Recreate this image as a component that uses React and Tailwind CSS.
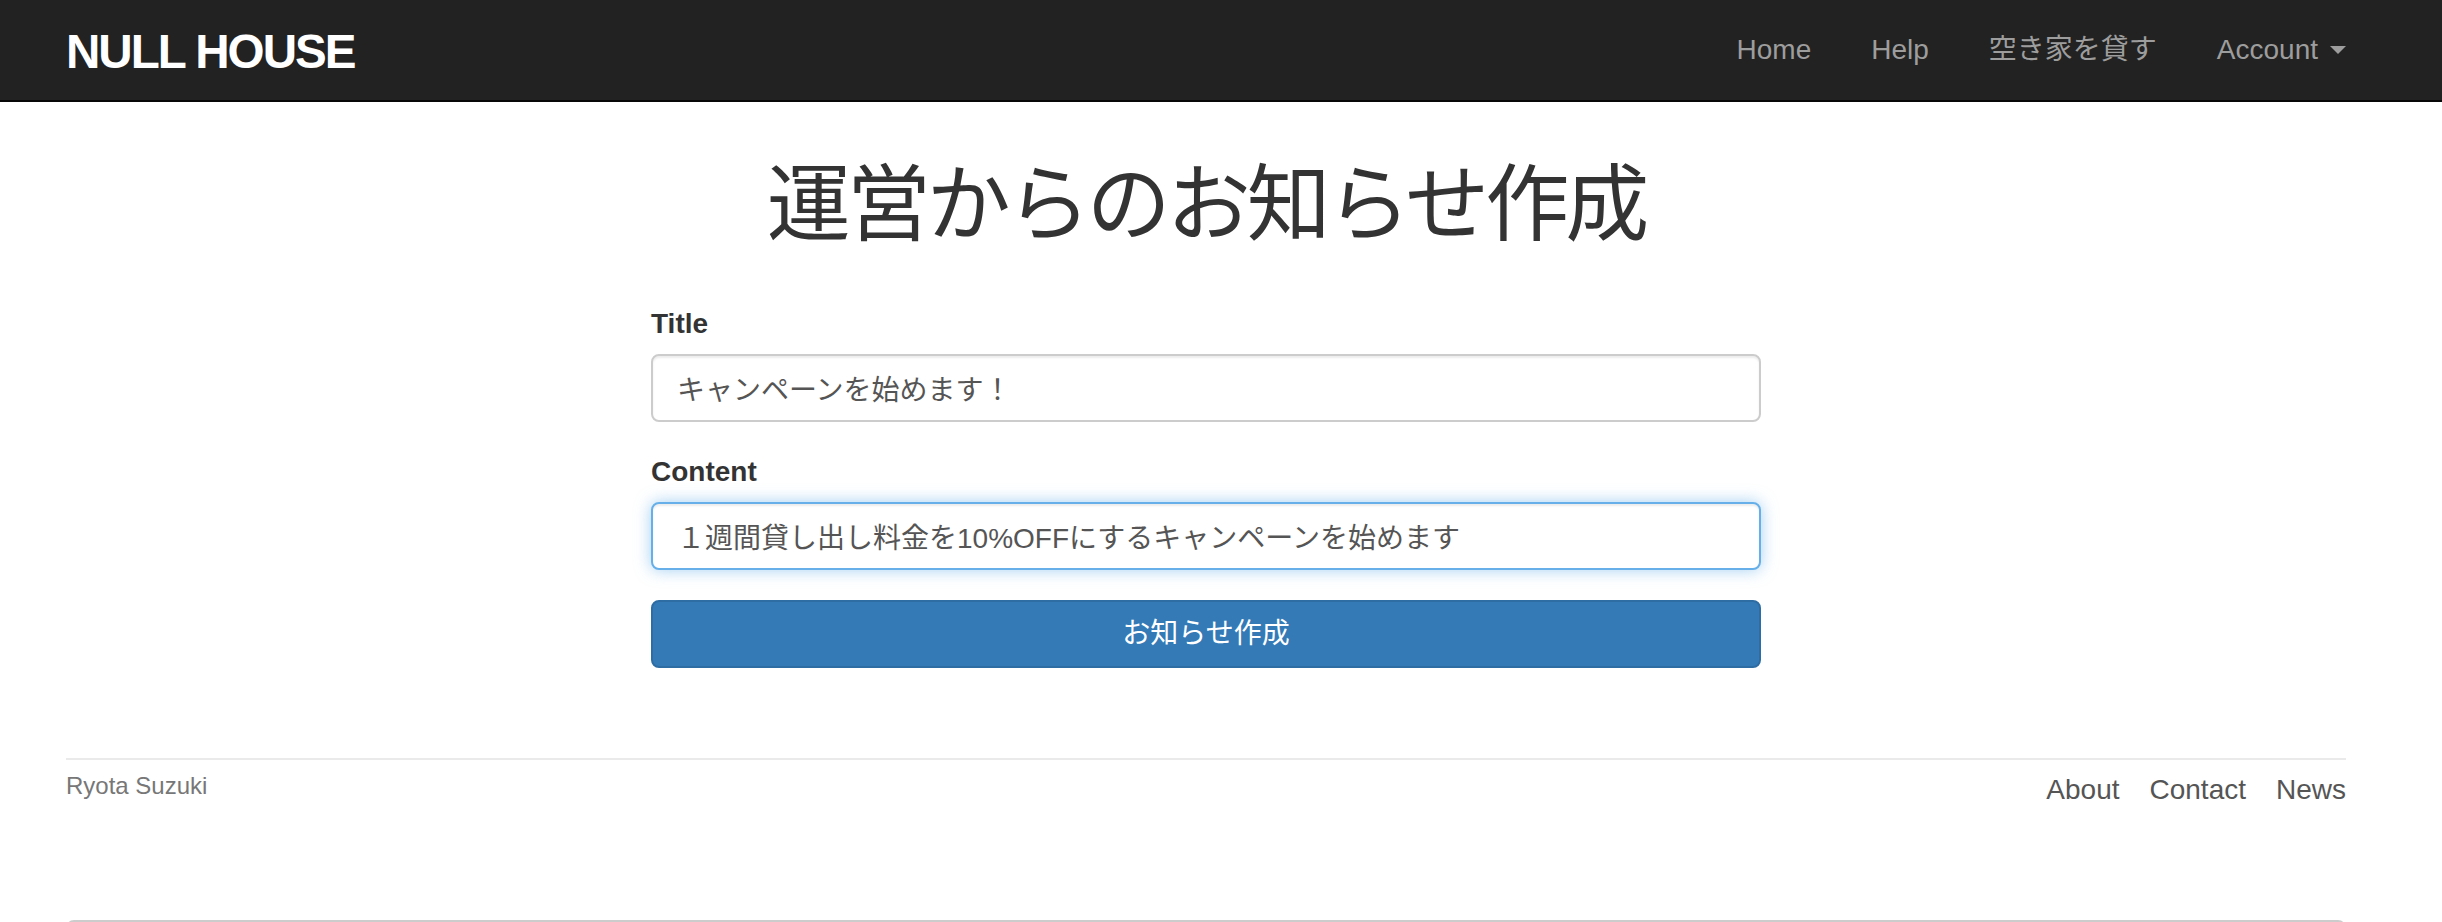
export default function App() {
  return (
    <div className="min-h-screen bg-white text-[#333] font-['Liberation_Sans','Noto_Sans_CJK_JP',sans-serif] text-[28px] leading-[40px]">
      <header className="h-[102px] bg-[#222] border-b-2 border-[#080808]">
        <div className="w-[2412px]">
          <div className="mx-auto w-[2340px] px-[30px] flex items-start justify-between">
            <a className="block pt-[18px] text-[47.6px] leading-[68px] font-bold uppercase tracking-[-2px] text-white">
              null house
            </a>
            <ul className="flex mr-[-30px]">
              <li>
                <a className="block px-[30px] py-[30px] text-[#9d9d9d]">Home</a>
              </li>
              <li>
                <a className="block px-[30px] py-[30px] text-[#9d9d9d]">Help</a>
              </li>
              <li>
                <a className="block px-[30px] py-[30px] text-[#9d9d9d]">空き家を貸す</a>
              </li>
              <li>
                <a className="flex items-center px-[30px] py-[30px] text-[#9d9d9d]">
                  Account
                  <span className="ml-[12px] inline-block w-0 h-0 border-t-[8px] border-t-[#9d9d9d] border-x-[8px] border-x-transparent" />
                </a>
              </li>
            </ul>
          </div>
        </div>
      </header>

      <div className="w-[2412px]">
        <div className="mx-auto w-[2340px] px-[30px]">
          <h1 className="mt-[57px] mb-[53px] text-center text-[84px] leading-[92px] tracking-[-4px] font-normal">
            運営からのお知らせ作成
          </h1>

          <div className="mx-auto w-[1110px]">
            <div className="mb-[30px]">
              <label className="block mb-[10px] font-bold">Title</label>
              <input
                readOnly
                defaultValue="キャンペーンを始めます！"
                className="block w-full h-[68px] px-[24px] py-[12px] border-2 border-[#ccc] rounded-[8px] text-[#555] bg-white shadow-[inset_0_2px_2px_rgba(0,0,0,0.075)] outline-none"
              />
            </div>
            <div className="mb-[30px]">
              <label className="block mb-[10px] font-bold">Content</label>
              <input
                readOnly
                defaultValue="１週間貸し出し料金を10%OFFにするキャンペーンを始めます"
                className="block w-full h-[68px] px-[24px] py-[12px] border-2 border-[#66afe9] rounded-[8px] text-[#555] bg-white shadow-[inset_0_2px_2px_rgba(0,0,0,0.075),0_0_16px_rgba(102,175,233,0.6)] outline-none"
              />
            </div>
            <button className="block w-full h-[68px] px-[24px] py-[12px] border-2 border-[#2e6da4] rounded-[8px] bg-[#337ab7] text-white text-center">
              お知らせ作成
            </button>
          </div>

          <footer className="mt-[90px] pt-[10px] border-t-2 border-[#eaeaea] text-[#777] flex justify-between items-start">
            <small className="text-[24px] leading-[32px]">Ryota Suzuki</small>
            <ul className="flex mb-[20px]">
              <li className="ml-[30px]">
                <a className="text-[#555]">About</a>
              </li>
              <li className="ml-[30px]">
                <a className="text-[#555]">Contact</a>
              </li>
              <li className="ml-[30px]">
                <a className="text-[#555]">News</a>
              </li>
            </ul>
          </footer>

          <pre className="mt-[90px] h-[120px] border-2 border-[#ccc] rounded-[8px] bg-[#f5f5f5]"></pre>
        </div>
      </div>
    </div>
  );
}
